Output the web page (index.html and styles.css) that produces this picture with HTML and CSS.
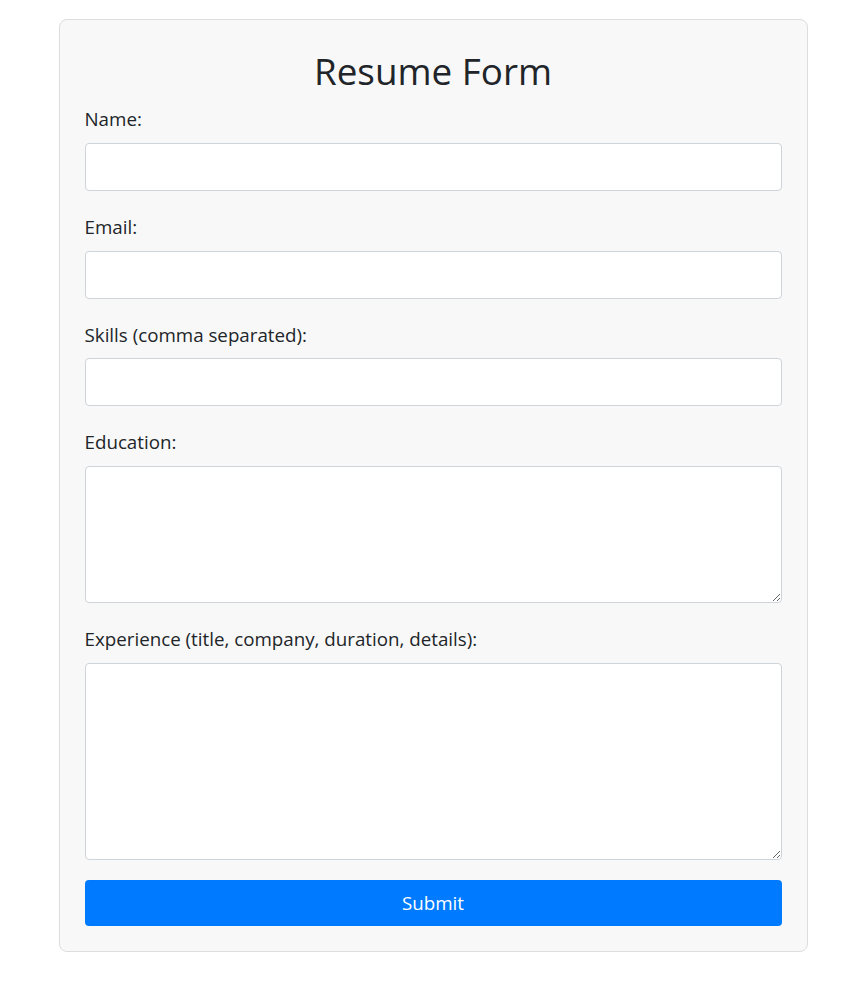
FILE: index.html
```html
<!DOCTYPE html>
<html lang="en">
<head>
<meta charset="utf-8">
<title>Resume Form</title>
<link rel="stylesheet" href="styles.css">
</head>
<body>
<div class="card">
  <h1 class="title">Resume Form</h1>
  <form class="form">
    <div class="group">
      <label class="label" for="name">Name:</label>
      <input class="control" id="name" type="text">
    </div>
    <div class="group">
      <label class="label" for="email">Email:</label>
      <input class="control" id="email" type="email">
    </div>
    <div class="group">
      <label class="label" for="skills">Skills (comma separated):</label>
      <input class="control" id="skills" type="text">
    </div>
    <div class="group">
      <label class="label" for="education">Education:</label>
      <textarea class="control area-edu" id="education"></textarea>
    </div>
    <div class="group">
      <label class="label" for="experience">Experience (title, company, duration, details):</label>
      <textarea class="control area-exp" id="experience"></textarea>
    </div>
    <button class="submit" type="submit">Submit</button>
  </form>
</div>
</body>
</html>
```
FILE: styles.css
```css
body {
  margin: 0;
  background: #ffffff;
  font-family: "Open Sans", "Noto Sans", sans-serif;
  color: #212529;
}

.card {
  box-sizing: border-box;
  width: 749px;
  margin: 19px auto 0;
  padding: 25px;
  background: #f8f8f8;
  border: 1px solid #dddddd;
  border-radius: 8px;
}

.title {
  margin: 0 0 8.4px;
  padding-top: 2px;
  font-size: 36.8px;
  font-weight: 400;
  line-height: 48px;
  text-align: center;
}

.form {
  margin: 0;
}

.group {
  margin-bottom: 20px;
}

.label {
  display: block;
  margin-bottom: 10px;
  padding-top: 2px;
  font-size: 18.75px;
  line-height: 27.67px;
}

.control {
  display: block;
  box-sizing: border-box;
  width: 100%;
  height: 48px;
  margin: 0;
  padding: 6px 12px;
  border: 1px solid #ced4da;
  border-radius: 4px;
  background: #ffffff;
  font-family: inherit;
  font-size: 18px;
}

.area-edu {
  height: 137px;
}

.area-exp {
  height: 197px;
}

.submit {
  display: block;
  width: 100%;
  height: 46px;
  border: 0;
  border-radius: 4px;
  background: #007bff;
  color: #ffffff;
  font-family: inherit;
  font-size: 18.75px;
}
```
